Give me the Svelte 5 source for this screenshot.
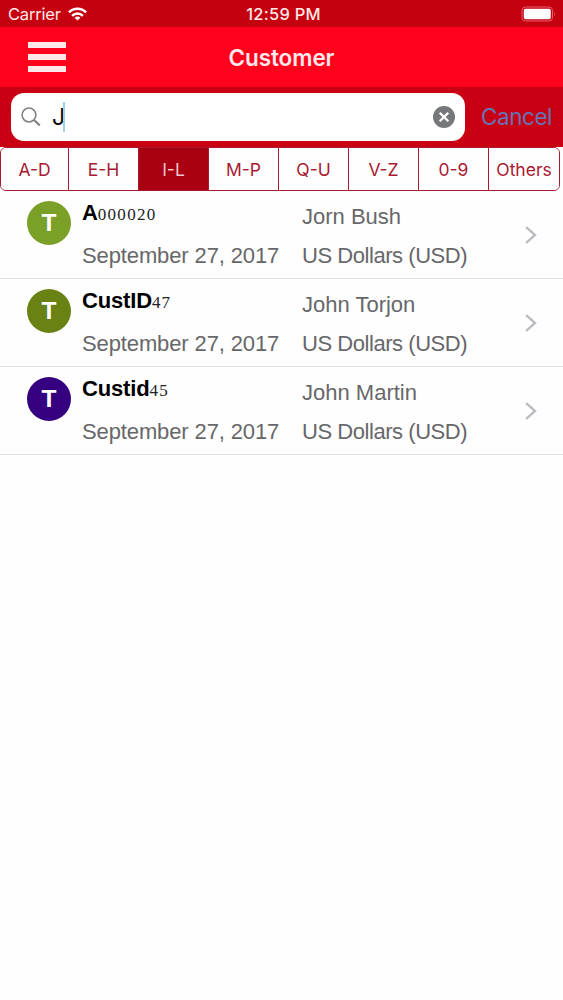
<script>
  const filters = ['A-D', 'E-H', 'I-L', 'M-P', 'Q-U', 'V-Z', '0-9', 'Others'];
  let active = $state('I-L');
  const customers = [
    { prefix: 'A', digits: '000020', name: 'Jorn Bush', color: '#7aa027', spacing: 1.3 },
    { prefix: 'CustID', digits: '47', name: 'John Torjon', color: '#6a8213', spacing: 1.1 },
    { prefix: 'Custid', digits: '45', name: 'John Martin', color: '#350080', spacing: 1.1 }
  ];
</script>

<div class="screen">
  <div class="status">
    <div class="carrier">
      <span>Carrier</span>
      <svg width="19" height="14" viewBox="0 0 20 14" fill="none" stroke="#fff" stroke-width="2.6">
        <path d="M1 5.3C6 .2 14 .2 19 5.3" />
        <path d="M4.3 8.9C7.6 5.7 12.4 5.7 15.7 8.9" />
        <path d="M10 13.8 6.9 10.9C8.7 9.3 11.3 9.3 13.1 10.9Z" fill="#fff" stroke="none" />
      </svg>
    </div>
    <span class="time">12:59 PM</span>
    <svg class="battery" width="36" height="16" viewBox="0 0 36 16">
      <rect x="1" y="1" width="30.5" height="14" rx="3.5" fill="none" stroke="#e5606a" stroke-width="1" />
      <rect x="2.8" y="2.8" width="27" height="10.4" rx="1.6" fill="#fff" />
      <path d="M33.4 5.5q1.8 2.5 0 5z" fill="#e5606a" />
    </svg>
  </div>

  <header>
    <button class="menu" aria-label="Menu"><i></i><i></i><i></i></button>
    <h1>Customer</h1>
  </header>

  <div class="search">
    <div class="field">
      <svg width="20" height="20" viewBox="0 0 20 20" fill="none" stroke="#808083" stroke-width="1.5">
        <circle cx="8" cy="8" r="6.9" />
        <path d="M13 13 18.8 18.5" stroke-width="2.1" />
      </svg>
      <span class="query">J</span><span class="caret"></span>
      <svg class="clear" width="22" height="22" viewBox="0 0 22 22">
        <circle cx="11" cy="11" r="11" fill="#77787b" />
        <path d="M6.7 6.7 15.3 15.3M15.3 6.7 6.7 15.3" stroke="#fff" stroke-width="2.3" />
      </svg>
    </div>
    <span class="cancel">Cancel</span>
  </div>

  <nav>
    {#each filters as f}
      <button class:active={f === active} onclick={() => (active = f)}>{f}</button>
    {/each}
  </nav>

  <ul>
    {#each customers as c}
      <li>
        <span class="avatar" style="background:{c.color}">T</span>
        <div class="col left">
          <div class="id"><b>{c.prefix}</b><span class="digits" style="letter-spacing:{c.spacing}px">{c.digits}</span></div>
          <div class="date">September 27, 2017</div>
        </div>
        <div class="col right">
          <div class="name">{c.name}</div>
          <div class="currency">US Dollars (USD)</div>
        </div>
        <svg class="chevron" width="12" height="18" viewBox="0 0 12 18" fill="none" stroke="#bdbdc1" stroke-width="2.4">
          <path d="M1.2 1.2 10 9 1.2 16.8" />
        </svg>
      </li>
    {/each}
  </ul>
</div>

<style>
  :global(body) { background: #fefefe; }
  .screen {
    width: 563px; height: 1000px; overflow: hidden; background: #fefefe;
    font-family: Inter, "Liberation Sans", sans-serif;
  }
  button { font: inherit; border: 0; padding: 0; margin: 0; }
  .status {
    height: 27px; box-sizing: border-box; padding: 1px 6px 0 8px;
    display: grid; grid-template-columns: 1fr auto 1fr; align-items: center;
    background: #c5000f; color: #ffe9e9; font-size: 16.5px; line-height: 26px;
  }
  .carrier { display: flex; align-items: center; gap: 7px; letter-spacing: -.2px; }
  .time { font-weight: 500; letter-spacing: .25px; padding-left: 2px; }
  .battery { justify-self: end; }
  header {
    height: 60px; display: grid; grid-template-columns: 66px 1fr 66px; align-items: center;
    background: #ff001d;
  }
  .menu { background: none; width: 38px; margin-left: 28px; display: flex; flex-direction: column; gap: 6px; }
  .menu i { height: 6px; background: #ffe7ea; }
  h1 { margin: 0; padding-top: 2px; text-align: center; font-size: 22.5px; line-height: 28px; font-weight: 600; color: #ffe9eb; letter-spacing: -.1px; }
  .search { height: 60px; box-sizing: border-box; padding: 6px 11px 0 11px; display: flex; background: #c90014; }
  .field {
    width: 454px; flex: none; height: 48px; box-sizing: border-box; border-radius: 13px; background: #fff;
    padding: 0 10px; display: flex; align-items: center;
  }
  .query { margin-left: 11px; width: 12px; font-size: 23px; line-height: 30px; color: #111; }
  .caret { width: 2px; height: 30px; background: #9cd3e8; margin-left: -1px; }
  .clear { margin-left: auto; }
  .cancel { margin-left: 16px; line-height: 47px; font-size: 22.5px; letter-spacing: -.45px; color: #6673b5; white-space: nowrap; }
  nav {
    width: 560px; height: 44px; box-sizing: border-box; display: grid;
    grid-template-columns: 67px repeat(6, 70px) 1fr; border: 1px solid #a91930; border-radius: 6px; overflow: hidden;
  }
  nav button { background: #fefefe; color: #a81932; font-size: 17.5px; border-left: 1px solid #a91930; }
  nav button:first-child { border-left: 0; }
  nav button.active { background: #a90012; color: #efc5cc; }
  ul { list-style: none; margin: 0; padding: 0; font-family: "Liberation Sans", Arial, sans-serif; }
  li {
    height: 88px; box-sizing: border-box; border-bottom: 1px solid #dededf;
    display: grid; grid-template-columns: 44px 220px 1fr 12px; padding: 0 26px 0 27px;
  }
  .avatar {
    width: 44px; height: 44px; border-radius: 50%; align-self: end; margin-bottom: 33px;
    display: grid; place-items: center; color: #fff; font-weight: 700; font-size: 24.5px; line-height: 44px;
  }
  .col { align-self: end; font-size: 22px; color: #67676a; white-space: nowrap; }
  .left { padding-left: 11px; }
  .right { padding-left: 11px; }
  .id { height: 27px; line-height: 27px; margin-bottom: 16px; color: #000; }
  .id b { font-size: 22px; letter-spacing: -.15px; }
  .digits { font-family: "Liberation Serif", "Times New Roman", serif; font-size: 17px; color: #222; }
  .date, .currency { height: 27px; line-height: 27px; margin-bottom: 9px; }
  .date { letter-spacing: -.12px; }
  .currency { letter-spacing: -.45px; }
  .name { height: 27px; line-height: 27px; margin-bottom: 12px; }
  .chevron { align-self: end; margin-bottom: 34px; }
</style>
